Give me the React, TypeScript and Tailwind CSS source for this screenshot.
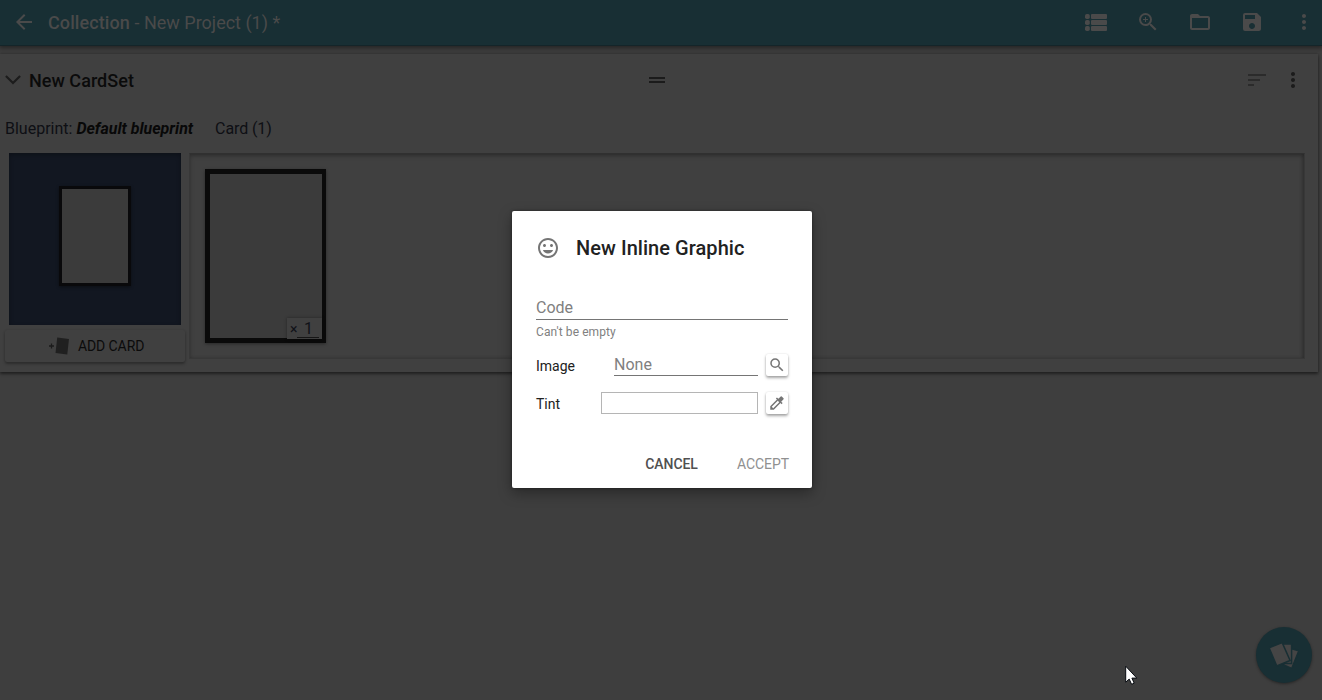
import React from "react";
import {
  MdArrowBack,
  MdColorize,
  MdDragHandle,
  MdFolderOpen,
  MdInsertEmoticon,
  MdMoreVert,
  MdSave,
  MdSearch,
  MdSort,
  MdZoomIn,
} from "react-icons/md";

function ListIcon() {
  return (
    <svg width="22" height="18" viewBox="0 0 22 18" fill="currentColor">
      {[0, 6, 12].map((y) => (
        <g key={y}>
          <rect x="0" y={y} width="4.8" height="5" rx="1.7" />
          <rect x="6" y={y} width="16" height="5" rx="1" />
        </g>
      ))}
    </svg>
  );
}

function ChevronIcon() {
  return (
    <svg width="16" height="10" viewBox="0 0 16 10" fill="none" stroke="#1c1c1c" strokeWidth="2.2">
      <path d="M0.9 1l7.1 7 7.1-7" />
    </svg>
  );
}

function AddCardIcon() {
  return (
    <svg width="20" height="18" viewBox="0 0 20 18">
      <path d="M0 9h5M2.5 6.5v5" stroke="#1b1b1b" strokeWidth="1.3" />
      <path d="M8.2 0.6L20 1.9 18.3 17.6 6.5 15.9z" fill="#202020" />
    </svg>
  );
}

function CardsIcon() {
  return (
    <svg width="30" height="27" viewBox="-1 -1 30 27" fill="#454545" stroke="#182f34" strokeWidth="1.5">
      <path d="M17 4.5l11.8 3.2L21.8 25.4l-8-3.4z" />
      <path d="M9 0.9h12.6v19.6H9z" />
      <path d="M-0.9 4.8L12.2-0.4 20.1 17.5 6.7 22.9z" />
    </svg>
  );
}

function Header() {
  return (
    <header className="relative z-10 flex h-[45px] shrink-0 items-center bg-[#182f34] pb-px text-[#4a4a4a] shadow-[0_1px_0_#142529,0_2px_5px_1px_rgba(0,0,0,0.45)]">
      <MdArrowBack className="ml-3 size-6" />
      <h1 className="ml-3 pt-[2px] text-[18px] leading-6">
        <span className="font-medium tracking-[0.1px]">Collection</span> - New Project (1) *
      </h1>
      <div className="-mr-3 ml-auto flex items-center">
        <span className="mr-[29px] flex pt-px">
          <ListIcon />
        </span>
        <MdZoomIn className="mr-7 size-6" />
        <MdFolderOpen className="mr-7 size-6" />
        <MdSave className="mr-7 size-6" />
        <MdMoreVert className="mr-[18px] size-6" />
      </div>
    </header>
  );
}

function BlueprintPreview() {
  return (
    <div className="flex w-[181px] flex-col pl-1">
      <div className="ml-[5px] flex h-[172px] w-[172px] items-center justify-center bg-[#121721] pb-1.5 shadow-[inset_0_2px_5px_rgba(0,0,0,0.3)]">
        <div className="h-[100px] w-[72px] border-[3px] border-[#09090b] bg-[#3b3b3b] shadow-[0_1px_3px_rgba(0,0,0,0.4)]" />
      </div>
      <button className="ml-px mt-[5px] flex h-8 w-[180px] items-center rounded-[2px] pl-[44px] text-[14px] text-[#0b0b0b] shadow-[0_2px_3px_rgba(0,0,0,0.3),0_0_2px_rgba(0,0,0,0.12)]">
        <AddCardIcon />
        <span className="ml-[9px] pt-px tracking-[-0.1px]">ADD CARD</span>
      </button>
    </div>
  );
}

function CardList() {
  return (
    <div className="ml-2 h-[206px] w-[1116px] border border-[#383838] border-t-[#303030] pl-[15px] pt-[15px] shadow-[inset_0_2px_4px_rgba(0,0,0,0.25),inset_-2px_0_3px_rgba(0,0,0,0.15)]">
      <div className="flex h-[174px] w-[121px] items-end justify-end border-[5px] border-r-4 border-[#0a0a0a] bg-[#3b3b3b] shadow-[0_1px_3px_rgba(0,0,0,0.4)]">
        <div className="-mb-px flex h-[21px] w-[35px] items-start bg-[#404040] pl-[3px] text-[#101218] shadow-[0_0_3px_rgba(0,0,0,0.4)]">
          <span className="text-[14px] leading-[22px]">×</span>
          <span className="flex h-5 w-[22px] items-center justify-center border-b border-[#161616] pt-[2px] text-[16px]">
            1
          </span>
        </div>
      </div>
    </div>
  );
}

function CardSet() {
  return (
    <section className="mt-[9px] h-[318px] w-[1318px] bg-[#404040] shadow-[0_2px_3px_rgba(0,0,0,0.45),0_0_3px_rgba(0,0,0,0.25)]">
      <div className="flex h-[52px] items-center text-[#1b1b1b]">
        <span className="ml-[5px]">
          <ChevronIcon />
        </span>
        <h2 className="ml-2 w-[616px] text-[18px] font-medium tracking-[0.03px] text-[#0b0b0b]">New CardSet</h2>
        <MdDragHandle className="size-6" />
        <MdSort className="ml-auto size-6 text-[#2b2b2b]" />
        <MdMoreVert className="ml-3 mr-[13px] size-6" />
      </div>
      <div className="flex h-[47px] items-center pb-[2px] pl-[5px] text-[16px] text-[#0e0f14]">
        <span>
          Blueprint: <b className="font-bold italic text-[#080808]">Default blueprint</b>
        </span>
        <span className="ml-[22px] tracking-[-0.1px]">Card (1)</span>
      </div>
      <div className="flex">
        <BlueprintPreview />
        <CardList />
      </div>
    </section>
  );
}

function SquareButton({ children }: { children: React.ReactNode }) {
  return (
    <button className="flex size-[22px] items-center justify-center rounded-[2px] bg-white text-[#757575] shadow-[0_2px_3px_rgba(0,0,0,0.35),0_0_2px_rgba(0,0,0,0.12)]">
      {children}
    </button>
  );
}

function GraphicDialog() {
  return (
    <div className="absolute inset-0 z-20 flex justify-center pl-[2px] pt-[211px]">
      <div className="h-[277px] w-[300px] rounded-[2px] bg-white px-6 text-[#212121] shadow-[0_5px_14px_rgba(0,0,0,0.35),0_0_3px_rgba(0,0,0,0.4)]">
        <div className="flex h-[73px] items-center">
          <MdInsertEmoticon className="size-6 text-[#757575]" />
          <h3 className="ml-4 text-[20px] font-medium tracking-[0.05px]">New Inline Graphic</h3>
        </div>
        <div className="mt-[9px] flex h-[27px] items-center border-b border-[#757575] pt-[3px] text-[16px] text-[#808080]">
          Code
        </div>
        <p className="h-[23px] pt-px text-[12px] leading-[23px] tracking-[0.08px] text-[#808080]">Can't be empty</p>
        <div className="mt-[11px] flex h-[22px] items-center">
          <span className="w-[78px] pt-[2px] text-[14px]">Image</span>
          <span className="flex h-[22px] w-[144px] items-center border-b border-[#757575] text-[16px] text-[#808080]">
            None
          </span>
          <span className="ml-2">
            <SquareButton>
              <MdSearch className="size-[18px]" />
            </SquareButton>
          </span>
        </div>
        <div className="mt-4 flex h-[22px] items-center">
          <span className="w-[65px] pt-[2px] text-[14px]">Tint</span>
          <span className="h-[22px] w-[157px] border border-[#b5b5b5]" />
          <span className="ml-2">
            <SquareButton>
              <MdColorize className="size-[18px]" />
            </SquareButton>
          </span>
        </div>
        <div className="-mr-px mt-[38px] flex h-6 items-center justify-end text-[14px]">
          <button className="font-medium tracking-[-0.05px] text-[#505050]">CANCEL</button>
          <button className="ml-[39px] tracking-[-0.05px] text-[#909090]">ACCEPT</button>
        </div>
      </div>
    </div>
  );
}

export default function App() {
  return (
    <div className="relative flex h-[700px] w-[1322px] flex-col overflow-hidden bg-[#3e3e3e] font-['Roboto',sans-serif]">
      <Header />
      <CardSet />
      <button className="absolute bottom-[17px] right-[10px] flex size-14 items-center justify-center rounded-full bg-[#182f34] shadow-[0_1px_3px_rgba(0,0,0,0.4)]">
        <CardsIcon />
      </button>
      <GraphicDialog />
      <svg className="absolute left-[1125px] top-[665px] z-30" width="13" height="21" viewBox="0 0 13 21">
        <path
          d="M0.7 1.2v16l3.5-3.1 2.4 5.2 2.6-1.1-2.3-5.1h4.9z"
          fill="#fff"
          stroke="#080c12"
          strokeWidth="1"
        />
      </svg>
    </div>
  );
}
